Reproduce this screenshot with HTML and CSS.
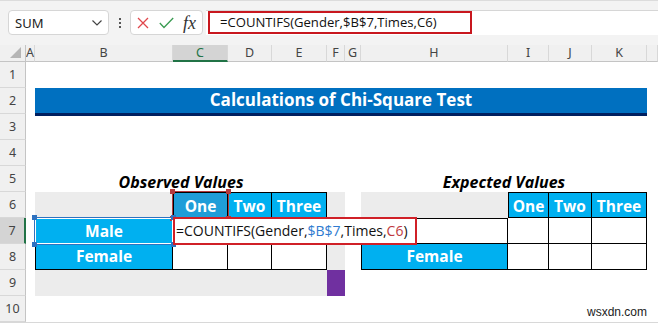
FILE: index.html
```html
<!DOCTYPE html>
<html lang="en">
<head>
  <meta charset="UTF-8">
  <title>Calculations of Chi-Square Test</title>
  <link rel="stylesheet" href="styles.css">
</head>
<body>
  <div class="toolbar">
    <div class="namebox">
      <span>SUM</span>
      <svg width="10" height="6" viewBox="0 0 10 6"><polyline points="0.5,0.5 5,5 9.5,0.5" fill="none" stroke="#444" stroke-width="1.2"/></svg>
    </div>
    <div class="dots"><i></i><i></i><i></i></div>
    <div class="fxbox">
      <svg width="12" height="12" viewBox="0 0 12 12"><path d="M1 1 L11 11 M11 1 L1 11" stroke="#e0474c" stroke-width="1.3"/></svg>
      <svg class="check" width="15" height="12" viewBox="0 0 15 12"><polyline points="0.8,6 5,10.5 14.2,1" fill="none" stroke="#3a9b52" stroke-width="1.3"/></svg>
      <span class="fx">fx</span>
    </div>
    <div class="formula-input">
      <div class="formula-mark">=COUNTIFS(Gender,$B$7,Times,C6)</div>
    </div>
  </div>

  <div class="sheet">
    <!-- column headers -->
    <div class="corner"><span class="tri"></span></div>
    <div class="colhdr">A</div>
    <div class="colhdr">B</div>
    <div class="colhdr active">C</div>
    <div class="colhdr">D</div>
    <div class="colhdr">E</div>
    <div class="colhdr">F</div>
    <div class="colhdr">G</div>
    <div class="colhdr">H</div>
    <div class="colhdr">I</div>
    <div class="colhdr">J</div>
    <div class="colhdr">K</div>
    <div class="colhdr"></div>

    <!-- row headers -->
    <div class="rowhdr r1">1</div>
    <div class="rowhdr r2">2</div>
    <div class="rowhdr r3">3</div>
    <div class="rowhdr r4">4</div>
    <div class="rowhdr r5">5</div>
    <div class="rowhdr r6">6</div>
    <div class="rowhdr r7 active">7</div>
    <div class="rowhdr r8">8</div>
    <div class="rowhdr r9">9</div>
    <div class="rowhdr r10">10</div>

    <div class="banner">Calculations of Chi-Square Test</div>

    <!-- observed values -->
    <div class="caption obs">Observed Values</div>
    <div class="shade cb r6"></div>
    <div class="shade cf-span"></div>
    <div class="shade cb-e r9"></div>
    <div class="purple cf r9"></div>

    <div class="cell head bl bt cc r6 picked">One</div>
    <div class="cell head bt cd r6">Two</div>
    <div class="cell head bt ce r6">Three</div>
    <div class="cell head bl bt cb r7">Male</div>
    <div class="cell head bl cb r8">Female</div>
    <div class="cell cc r7"></div>
    <div class="cell cd r7"></div>
    <div class="cell ce r7"></div>
    <div class="cell cc r8"></div>
    <div class="cell cd r8"></div>
    <div class="cell ce r8"></div>

    <!-- expected values -->
    <div class="caption exp">Expected Values</div>
    <div class="shade ch r6"></div>
    <div class="cell head bl bt ci r6">One</div>
    <div class="cell head bt cj r6">Two</div>
    <div class="cell head bt ck r6">Three</div>
    <div class="cell bl bt ch r7"></div>
    <div class="cell head bl ch r8">Female</div>
    <div class="cell ci r7"></div>
    <div class="cell cj r7"></div>
    <div class="cell ck r7"></div>
    <div class="cell ci r8"></div>
    <div class="cell cj r8"></div>
    <div class="cell ck r8"></div>

    <!-- reference highlights and the cell editor -->
    <div class="ref ref-red cc r6"><i class="h tl"></i><i class="h tr"></i><i class="h bl2"></i><i class="h br"></i></div>
    <div class="ref ref-blue cb r7"><i class="h tl"></i><i class="h tr"></i><i class="h bl2"></i><i class="h br"></i></div>
    <div class="editor">=COUNTIFS(Gender,<span class="blue">$B$7</span>,Times,<span class="red">C6</span>)</div>

    <div class="watermark">wsxdn.com</div>
  </div>
</body>
</html>
```

FILE: styles.css
```css
body {
  margin: 0;
  width: 658px;
  height: 324px;
  overflow: hidden;
  background-color: #fff;
  font-family: "Open Sans", sans-serif;
}

/* formula bar */

.toolbar {
  display: flex;
  align-items: flex-start;
  height: 45px;
  box-sizing: border-box;
  padding: 9px 0 0 8px;
  background-color: #f3f3f3;
  border-top: 1px solid #dcdcdc;
}

.namebox,
.fxbox {
  height: 25px;
  box-sizing: border-box;
  background-color: #fff;
  border: 1px solid #d6d6d6;
  border-radius: 4px;
  display: flex;
  align-items: center;
}

.namebox {
  width: 101px;
  justify-content: space-between;
  padding: 0 6px;
  font-family: "Noto Sans", sans-serif;
  font-size: 13px;
  color: #222;
}

.dots {
  width: 21px;
  height: 25px;
  display: flex;
  flex-direction: column;
  align-items: center;
  justify-content: center;
  gap: 2px;
}

.dots i {
  width: 2px;
  height: 2px;
  background-color: #555;
}

.fxbox {
  width: 73px;
  padding-left: 6px;
}

.fxbox .check {
  margin-left: 10px;
}

.fx {
  margin-left: 9px;
  font-family: "Liberation Serif", serif;
  font-style: italic;
  font-size: 18px;
  color: #333;
  line-height: 1;
}

.formula-input {
  flex: 1;
  margin-left: 3px;
  height: 25px;
  box-sizing: border-box;
  background-color: #fff;
  border-top: 1px solid #d6d6d6;
  padding-left: 2px;
}

.formula-mark {
  width: 264px;
  height: 23px;
  box-sizing: border-box;
  border: 2px solid #c8171e;
  padding-left: 10px;
  font-size: 13.1px;
  line-height: 19px;
  color: #111;
}

/* sheet grid */

.sheet {
  display: grid;
  grid-template-columns: 26px 9px 138px 55px 44px 55px 18px 16px 147px 41px 43px 55px 11px;
  grid-template-rows: 17px repeat(10, 26px);
  border-bottom: 1px solid #d8d8d8;
}

.corner,
.colhdr {
  grid-row: 1;
  background-color: #f0f0f0;
  border-bottom: 1px solid #c4c4c4;
  box-sizing: border-box;
}

.corner {
  border-right: 1px solid #c4c4c4;
  position: relative;
}

.tri {
  position: absolute;
  right: 4px;
  bottom: 3px;
  width: 0;
  height: 0;
  border-left: 11px solid transparent;
  border-bottom: 11px solid #b5b5b5;
}

.colhdr {
  border-right: 1px solid #d8d8d8;
  font-family: "Noto Sans", sans-serif;
  font-size: 12.5px;
  color: #444;
  text-align: center;
  line-height: 16px;
}

.colhdr.active {
  background-color: #d4d4d4;
  border-bottom: 2px solid #217346;
  color: #217346;
}

.rowhdr {
  grid-column: 1;
  background-color: #f0f0f0;
  border-right: 1px solid #c4c4c4;
  border-bottom: 1px solid #d8d8d8;
  box-sizing: border-box;
  font-family: "Noto Sans", sans-serif;
  font-size: 12.5px;
  color: #444;
  text-align: center;
  padding-top: 5px;
  line-height: 16px;
}

.rowhdr.active {
  background-color: #d4d4d4;
  border-right: 2px solid #217346;
}

/* rows: sheet row n sits on grid row n + 1 */
.r1 { grid-row: 2; }
.r2 { grid-row: 3; }
.r3 { grid-row: 4; }
.r4 { grid-row: 5; }
.r5 { grid-row: 6; }
.r6 { grid-row: 7; }
.r7 { grid-row: 8; }
.r8 { grid-row: 9; }
.r9 { grid-row: 10; }
.r10 { grid-row: 11; }

.cb { grid-column: 3; }
.cc { grid-column: 4; }
.cd { grid-column: 5; }
.ce { grid-column: 6; }
.cf { grid-column: 7; }
.ch { grid-column: 9; }
.ci { grid-column: 10; }
.cj { grid-column: 11; }
.ck { grid-column: 12; }

.banner {
  grid-column: 3 / 13;
  grid-row: 3;
  margin-bottom: -2px;
  background-color: #0070c0;
  border-bottom: 3px solid #002060;
  color: #fff;
  font-weight: 700;
  font-size: 17px;
  text-align: center;
  line-height: 24px;
}

.caption {
  grid-row: 6;
  align-self: end;
  text-align: center;
  font-weight: 700;
  font-style: italic;
  font-size: 16px;
  line-height: 20px;
  color: #000;
}

.caption.obs { grid-column: 3 / 7; }
.caption.exp { grid-column: 9 / 13; }

.shade { background-color: #ececec; }
.shade.cf-span { grid-column: 7; grid-row: 7 / 10; }
.shade.cb-e { grid-column: 3 / 7; }
.purple { background-color: #7030a0; }

.cell {
  box-sizing: border-box;
  border-right: 1px solid #000;
  border-bottom: 1px solid #000;
  background-color: #fff;
}

.cell.bl { border-left: 1px solid #000; }
.cell.bt { border-top: 1px solid #000; }

.cell.head {
  background-color: #00b0f0;
  color: #fff;
  font-weight: 700;
  font-size: 15.5px;
  text-align: center;
  line-height: 24px;
}

.cell.r6 { line-height: 26px; }

.cell.head.picked { background-color: #1f9dd8; }

/* reference highlights */

.ref {
  position: relative;
  z-index: 2;
  margin: -1px;
  border: 1px solid;
}

.ref-red { border-color: #b23a3e; }
.ref-blue { border-color: #2f72c0; box-shadow: inset 0 0 0 1px #fff; }

.ref .h {
  position: absolute;
  width: 5px;
  height: 5px;
}

.ref-red .h { background-color: #b23a3e; }
.ref-blue .h { background-color: #2f72c0; }

.h.tl { left: -3px; top: -3px; }
.h.tr { right: -3px; top: -3px; }
.h.bl2 { left: -3px; bottom: -3px; }
.h.br { right: -3px; bottom: -3px; }

.editor {
  grid-column: 4 / 10;
  grid-row: 8;
  justify-self: start;
  z-index: 3;
  width: 244px;
  margin: -1px 0;
  box-sizing: border-box;
  background-color: #fff;
  border: 2px solid #d02027;
  padding-left: 1px;
  font-size: 14px;
  line-height: 24px;
  color: #111;
  white-space: nowrap;
}

.editor .blue { color: #2f7bd0; }
.editor .red { color: #c0393e; }

.watermark {
  grid-column: 10 / 13;
  grid-row: 11;
  align-self: end;
  text-align: right;
  font-family: "Liberation Sans", Arial, sans-serif;
  font-size: 12px;
  color: #222;
  padding-bottom: 3px;
}
```
